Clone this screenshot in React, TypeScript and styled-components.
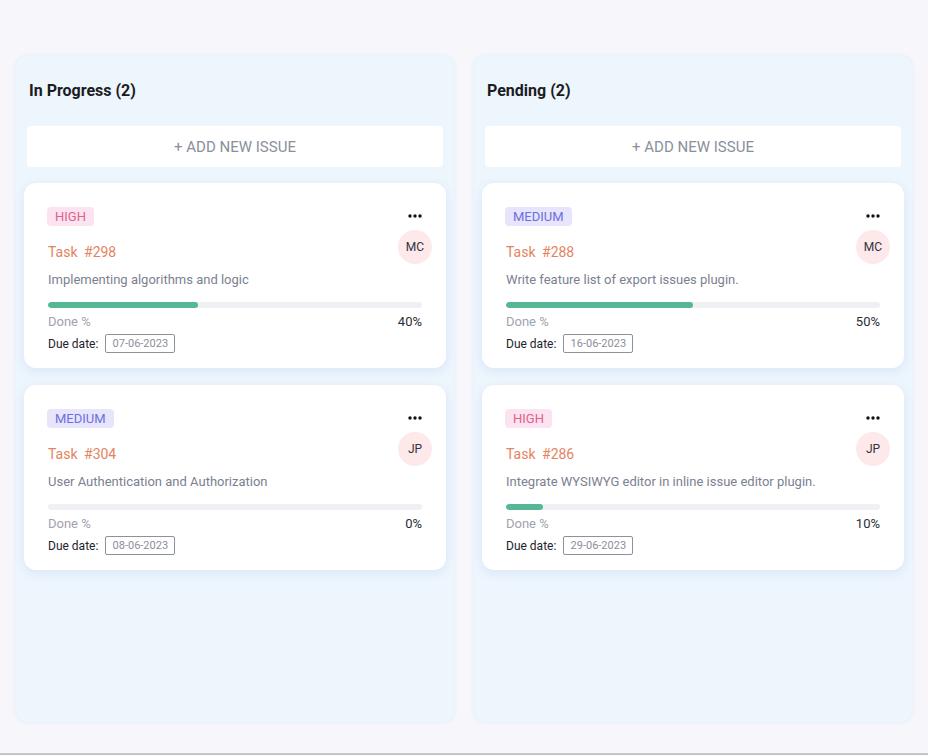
import React from "react";
import styled, { createGlobalStyle } from "styled-components";

const Global = createGlobalStyle`
  html, body { margin: 0; padding: 0; background: #f7f6fb; }
  body { font-family: Roboto, "Liberation Sans", Arial, sans-serif; }
  * { box-sizing: border-box; }
`;

const Page = styled.div`
  height: 755px;
  border-bottom: 2px solid #c6c6c8;
  padding: 56px 0 0 16px;
  background: #f7f6fb;
`;

const Board = styled.div`
  display: grid;
  grid-template-columns: 438px 438px;
  gap: 20px;
`;

const Column = styled.section`
  height: 666px;
  background: #edf5fd;
  border-radius: 12px;
  padding: 25px 8px 0;
  box-shadow: 0 0 4px rgba(200, 230, 250, 0.6);
  display: flex;
  flex-direction: column;
`;

const ColumnTitle = styled.h2`
  margin: 0;
  padding: 0 5px;
  font-size: 16px;
  line-height: 19px;
  font-weight: 700;
  color: #1b1b22;
`;

const AddButton = styled.button`
  margin: 26px 3px 16px;
  height: 41px;
  border: none;
  border-radius: 4px;
  background: #ffffff;
  font-family: Roboto, "Liberation Sans", Arial, sans-serif;
  font-size: 15px;
  color: #8a8f9c;
  cursor: pointer;
`;

const CardList = styled.div`
  display: flex;
  flex-direction: column;
  gap: 17px;
`;

const Card = styled.article`
  background: #ffffff;
  border-radius: 12px;
  padding: 24px 24px 15px 24px;
  box-shadow: 0 3px 8px rgba(190, 215, 240, 0.45);
`;

const TopRow = styled.div`
  display: flex;
  justify-content: space-between;
  align-items: center;
  height: 19px;
  margin-left: -1px;
`;

const Badge = styled.span<{ $level: "HIGH" | "MEDIUM" }>`
  display: inline-block;
  padding: 0 8px;
  height: 19px;
  line-height: 19px;
  border-radius: 4px;
  font-size: 13px;
  background: ${(p) => (p.$level === "HIGH" ? "#fce3f2" : "#e7e5fb")};
  color: ${(p) => (p.$level === "HIGH" ? "#e06288" : "#6e6fe0")};
`;

const Dots = styled.svg`
  width: 14px;
  height: 4px;
  margin-top: -1px;
`;

const TitleRow = styled.div`
  display: flex;
  justify-content: space-between;
  align-items: flex-start;
  margin-top: 4px;
  height: 34px;
`;

const TaskTitle = styled.div`
  margin-top: 14px;
  font-size: 14px;
  line-height: 16px;
  color: #e3845f;
  word-spacing: 3px;
`;

const Avatar = styled.div`
  width: 34px;
  height: 34px;
  border-radius: 50%;
  background: #fde8ea;
  color: #2f3440;
  font-size: 12px;
  display: flex;
  align-items: center;
  justify-content: center;
  margin-right: -10px;
`;

const Description = styled.p`
  margin: 8px 0 0;
  font-size: 13px;
  line-height: 16px;
  color: #7b8191;
`;

const Track = styled.div`
  margin-top: 14px;
  height: 6px;
  border-radius: 3px;
  background: #eff0f3;
  overflow: hidden;
`;

const Fill = styled.div`
  height: 100%;
  border-radius: 3px;
  background: #55b793;
`;

const DoneRow = styled.div`
  margin-top: 6px;
  display: flex;
  justify-content: space-between;
  font-size: 13px;
  line-height: 16px;
`;

const DoneLabel = styled.span`
  color: #9ea3ae;
`;

const DoneValue = styled.span`
  color: #2a2d35;
`;

const DueRow = styled.div`
  margin-top: 4px;
  display: flex;
  align-items: center;
  gap: 7px;
  font-size: 12px;
`;

const DueLabel = styled.span`
  color: #22232a;
`;

const DateBox = styled.span`
  display: inline-block;
  width: 70px;
  height: 19px;
  line-height: 17px;
  border: 1px solid #8e9199;
  border-radius: 2px;
  font-size: 11px;
  color: #8a8f9c;
  text-align: center;
`;

type Task = {
  level: "HIGH" | "MEDIUM";
  id: number;
  desc: string;
  who: string;
  pct: number;
  due: string;
};

const columns: { title: string; tasks: Task[] }[] = [
  {
    title: "In Progress (2)",
    tasks: [
      { level: "HIGH", id: 298, desc: "Implementing algorithms and logic", who: "MC", pct: 40, due: "07-06-2023" },
      { level: "MEDIUM", id: 304, desc: "User Authentication and Authorization", who: "JP", pct: 0, due: "08-06-2023" },
    ],
  },
  {
    title: "Pending (2)",
    tasks: [
      { level: "MEDIUM", id: 288, desc: "Write feature list of export issues plugin.", who: "MC", pct: 50, due: "16-06-2023" },
      { level: "HIGH", id: 286, desc: "Integrate WYSIWYG editor in inline issue editor plugin.", who: "JP", pct: 10, due: "29-06-2023" },
    ],
  },
];

function TaskCard({ t }: { t: Task }) {
  return (
    <Card>
      <TopRow>
        <Badge $level={t.level}>{t.level}</Badge>
        <Dots viewBox="0 0 14 4">
          <circle cx="2" cy="2" r="1.7" fill="#111" />
          <circle cx="7" cy="2" r="1.7" fill="#111" />
          <circle cx="12" cy="2" r="1.7" fill="#111" />
        </Dots>
      </TopRow>
      <TitleRow>
        <TaskTitle>Task #{t.id}</TaskTitle>
        <Avatar>{t.who}</Avatar>
      </TitleRow>
      <Description>{t.desc}</Description>
      <Track>
        <Fill style={{ width: `${t.pct}%` }} />
      </Track>
      <DoneRow>
        <DoneLabel>Done %</DoneLabel>
        <DoneValue>{t.pct}%</DoneValue>
      </DoneRow>
      <DueRow>
        <DueLabel>Due date:</DueLabel>
        <DateBox>{t.due}</DateBox>
      </DueRow>
    </Card>
  );
}

export default function App() {
  return (
    <>
      <Global />
      <Page>
        <Board>
          {columns.map((c) => (
            <Column key={c.title}>
              <ColumnTitle>{c.title}</ColumnTitle>
              <AddButton>+ ADD NEW ISSUE</AddButton>
              <CardList>
                {c.tasks.map((t) => (
                  <TaskCard key={t.id} t={t} />
                ))}
              </CardList>
            </Column>
          ))}
        </Board>
      </Page>
    </>
  );
}
